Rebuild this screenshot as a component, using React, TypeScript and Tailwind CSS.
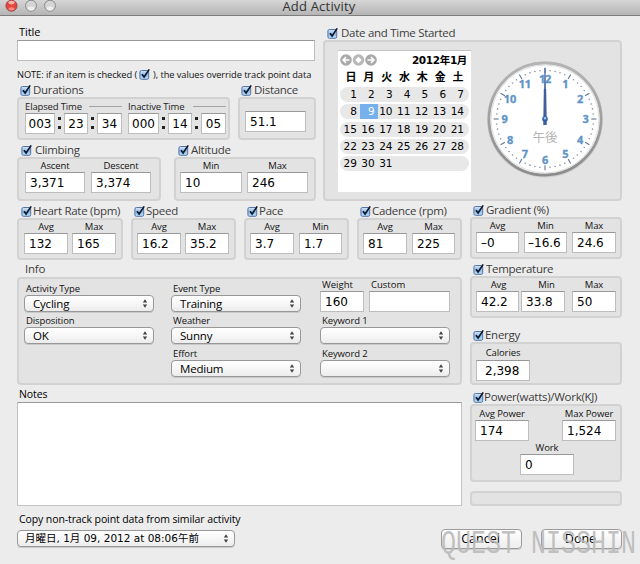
import type { ReactNode } from "react";
import clsx from "clsx";

function Check({ className }: { className?: string }) {
  return (
    <svg viewBox="0 0 12 13" className={clsx("h-[13px] w-3 shrink-0", className)}>
      <defs>
        <linearGradient id="chk" x1="0" y1="0" x2="0" y2="1">
          <stop offset="0" stopColor="#d8e8f8" />
          <stop offset="0.5" stopColor="#8dbbe8" />
          <stop offset="1" stopColor="#b9e2fb" />
        </linearGradient>
      </defs>
      <rect x="0.9" y="2.5" width="8.8" height="8.8" rx="1.5" fill="url(#chk)" stroke="#5673a5" />
      <path d="M3 6.2 5.1 9 10.2 1.4" fill="none" stroke="#10182c" strokeWidth="1.7" />
    </svg>
  );
}

type GroupProps = {
  title: string;
  className?: string;
  head?: string;
  label?: string;
  body?: string;
  children?: ReactNode;
};

function Group({ title, className, head = "pl-[3px]", label = "pl-px", body, children }: GroupProps) {
  return (
    <div className={clsx("flex shrink-0 flex-col", className)}>
      <div className={clsx("flex h-3 items-center pb-[2px] text-[11.5px] leading-3 tracking-[-0.28px] text-[#3c3c3c]", head)}>
        <Check />
        <span className={label}>{title}</span>
      </div>
      <div className={clsx(panel, "flex", body)}>{children}</div>
    </div>
  );
}

const panel = "rounded-[4px] border-2 border-[#d2d2d2] bg-[#e3e3e3]";

function Input({ value, className }: { value?: string; className?: string }) {
  return (
    <div
      className={clsx(
        "flex h-[21px] shrink-0 items-center border border-[#bdbdbd] border-t-[#999] bg-white pt-px pl-1 font-['DejaVu_Sans'] text-[12px] text-black",
        className,
      )}
    >
      {value}
    </div>
  );
}

function Field({ label, value, className }: { label: string; value: string; className: string }) {
  return (
    <div className="flex flex-col items-center">
      <span className="h-[13px] text-[9.5px] leading-[14px] tracking-[-0.1px] text-[#111]">{label}</span>
      <Input value={value} className={className} />
    </div>
  );
}

function Popup({ value, className, text = "text-[11.5px] tracking-[-0.2px] pl-2" }: { value?: string; className?: string; text?: string }) {
  return (
    <div
      className={clsx(
        "flex h-[17px] shrink-0 items-center justify-between rounded-[4px] border border-[#989898] bg-linear-to-b from-white via-[#f7f7f7] to-[#ececec] pr-[5px] text-black shadow-[0_1px_0_#c9c9c9]",
        className,
      )}
    >
      <span className={text}>{value}</span>
      <svg viewBox="0 0 6 9" className="h-[9px] w-1.5">
        <path d="M3 0.3 5.2 3.5H0.8zM3 8.7 5.2 5.5H0.8z" fill="#444" />
      </svg>
    </div>
  );
}

function LabeledPopup({ label, value, className }: { label: string; value?: string; className?: string }) {
  return (
    <div className={clsx("flex w-[130px] flex-col", className)}>
      <span className="h-3 pl-0.5 text-[9.5px] leading-3 tracking-[-0.1px] text-[#111]">{label}</span>
      <Popup value={value} />
    </div>
  );
}

function TimeFields({ label, values, first, last }: { label: string; values: string[]; first: string; last: string }) {
  return (
    <div className="flex flex-col">
      <div className="flex h-[13px] items-center">
        <span className="text-[9.5px] leading-3 tracking-[-0.15px] text-[#222]">{label}</span>
        <span className={clsx("ml-auto h-px bg-[#a5a5a5]", last)} />
      </div>
      <div className="flex">
        <Input value={values[0]} className={clsx("justify-center pl-0!", first)} />
        <Colon />
        <Input value={values[1]} className="w-6 justify-center pl-0!" />
        <Colon />
        <Input value={values[2]} className="w-[25px] justify-center pl-0!" />
      </div>
    </div>
  );
}

function Colon() {
  return (
    <span className="flex w-[9px] flex-col items-center gap-1.5 pt-1">
      <i className="h-[3px] w-[3px] bg-[#222]" />
      <i className="h-[3px] w-[3px] bg-[#222]" />
    </span>
  );
}

const weekdays = ["日", "月", "火", "水", "木", "金", "土"];
const weeks = [1, 8, 15, 22, 29];

function Calendar() {
  return (
    <div className="h-[142px] w-[133px] border-t border-[#c4c4c4] bg-white font-['DejaVu_Sans','Noto_Sans_CJK_JP',sans-serif] text-black">
      <div className="flex h-[18px] items-center justify-between pr-1 pl-0.5">
        <svg viewBox="0 0 37 12" className="h-3 w-[37px]">
          <g fill="#a9a9a9">
            <circle cx="6" cy="6" r="5.8" />
            <circle cx="18.5" cy="6" r="5.8" fill="#b8b8b8" />
            <circle cx="31" cy="6" r="5.8" />
          </g>
          <path d="M18.5 2.8 21.7 6 18.5 9.2 15.3 6z" fill="#fff" />
          <path d="M9.5 6H3.5M6 3.2 3.2 6 6 8.8M27.5 6h6M31 3.2 33.8 6 31 8.8" fill="none" stroke="#fff" strokeWidth="1.7" />
        </svg>
        <span className="text-[10.5px] leading-3 font-bold tracking-[-0.35px]">2012年1月</span>
      </div>
      <div className="grid h-[18px] grid-cols-7 items-center pr-1 pl-1 text-center text-[11px] leading-3 font-bold">
        {weekdays.map((d) => (
          <span key={d}>{d}</span>
        ))}
      </div>
      <div className="flex flex-col gap-[2.3px] px-0.5">
        {weeks.map((start) => (
          <div key={start} className="grid h-[15px] grid-cols-7 rounded-full bg-[#e8e8e8] pr-[2px] pl-[2px] text-right text-[10.5px] leading-[15px]">
            {weekdays.map((_, i) => {
              const day = start + i;
              return (
                <span key={i} className={clsx("pr-[3px]", day === 9 && "bg-[#76b1ee] text-white")}>
                  {day <= 31 ? day : ""}
                </span>
              );
            })}
          </div>
        ))}
      </div>
    </div>
  );
}

function Clock() {
  const at = (deg: number, r: number) => {
    const a = (deg * Math.PI) / 180;
    return [60 + r * Math.sin(a), 60 - r * Math.cos(a)];
  };
  return (
    <svg viewBox="0 0 120 120" className="size-[120px]">
      <defs>
        <linearGradient id="rim" x1="0" y1="0" x2="0" y2="1">
          <stop offset="0" stopColor="#b4b4b4" />
          <stop offset="1" stopColor="#8c8c8c" />
        </linearGradient>
      </defs>
      <circle cx="60" cy="60.5" r="58" fill="#cfcfcf" />
      <circle cx="60" cy="60" r="56" fill="#fff" stroke="url(#rim)" strokeWidth="2.8" />
      <circle cx="60" cy="60" r="54" fill="none" stroke="#dedede" strokeWidth="1" />
      {Array.from({ length: 60 }, (_, i) => {
        const [x, y] = at(i * 6, 48.5);
        if (i % 5) return <circle key={i} cx={x} cy={y} r="0.8" fill="#8194ad" />;
        const [x1, y1] = at(i * 6, 46.3);
        const [x2, y2] = at(i * 6, 51.3);
        return <line key={i} x1={x1} y1={y1} x2={x2} y2={y2} stroke="#62758f" strokeWidth="1.1" />;
      })}
      {Array.from({ length: 12 }, (_, i) => {
        const [x, y] = at((i + 1) * 30, 40.5);
        return (
          <text
            key={i}
            x={x}
            y={y + 4.3}
            textAnchor="middle"
            fill="#5e93c6"
            stroke="#5e93c6"
            strokeWidth="0.3"
            className="font-['Open_Sans'] text-[11px] font-bold tracking-[-0.2px]"
          >
            {i + 1}
          </text>
        );
      })}
      <text x="60" y="83" textAnchor="middle" fill="#b4b4b4" className="font-['Noto_Sans_CJK_JP',sans-serif] text-[12.5px]">
        午後
      </text>
      <path d="M59.4 9h1.2l0.9 57h-3z" fill="#4c6ba6" />
      <path d="M58.8 30h2.4l0.3 36h-3z" fill="#3f5e9c" />
      <circle cx="60" cy="60" r="2.8" fill="#2e5ea8" />
      <circle cx="60" cy="59.3" r="1.2" fill="#a3d0f5" />
    </svg>
  );
}

function TitleBar() {
  return (
    <div className="relative flex h-4 items-start justify-center border-b border-[#7d7d7d] bg-linear-to-b from-[#d6d6d6] to-[#b5b5b5]">
      <svg viewBox="0 0 60 13" className="absolute top-0 left-0 h-[13px] w-[60px]">
        <circle cx="11.5" cy="5.7" r="5.5" fill="#e5443f" stroke="#9c3e3c" />
        <ellipse cx="11.5" cy="2.6" rx="3.2" ry="1.8" fill="#f7b2ac" />
        <ellipse cx="11.5" cy="8.8" rx="3" ry="1.6" fill="#f58a80" />
        <circle cx="31" cy="5.7" r="5.5" fill="#d5d5d5" stroke="#8a8a8a" />
        <circle cx="50" cy="5.7" r="5.5" fill="#d5d5d5" stroke="#8a8a8a" />
        <ellipse cx="31" cy="8.5" rx="3.4" ry="2" fill="#eee" />
        <ellipse cx="50" cy="8.5" rx="3.4" ry="2" fill="#eee" />
      </svg>
      <span className="pr-0.5 text-[13px] leading-[13px] tracking-[0.2px] text-[#333]">Add Activity</span>
    </div>
  );
}

function PushButton({ children }: { children: string }) {
  return (
    <button className="h-5 w-[81px] rounded-[4px] border border-[#9b9b9b] bg-linear-to-b from-white to-[#ededed] pr-0.5 text-[12.5px] leading-[18px] text-black shadow-[0_1px_0_#cfcfcf]">
      {children}
    </button>
  );
}

export default function App() {
  return (
    <div className="relative h-[564px] w-[640px] overflow-hidden bg-[#ececec] font-['Open_Sans','Noto_Sans_CJK_JP',sans-serif] whitespace-nowrap">
      <TitleBar />

      {/* Title, durations, climbing + date */}
      <div className="flex h-[185px] gap-[7px] pl-[17px]">
        <div className="flex w-[299px] flex-col">
          <span className="mt-2.5 h-3.5 pl-0.5 text-[11px] leading-3 tracking-[-0.1px]">Title</span>
          <Input className="w-[298px]" />
          <div className="flex h-6 items-center pt-[3px] text-[9.3px] leading-3 tracking-[-0.08px] text-[#111]">
            NOTE: if an item is checked (<Check className="mx-0.5" />), the values override track point data
          </div>
          <div className="flex justify-between">
            <Group title="Durations" className="w-[213px]" body="h-[43px] gap-1.5 pt-[1px] pl-1.5">
              <TimeFields label="Elapsed Time" values={["003", "23", "34"]} first="w-[30px]" last="w-[33px]" />
              <TimeFields label="Inactive Time" values={["000", "14", "05"]} first="w-[31px]" last="w-[33px]" />
            </Group>
            <Group title="Distance" className="w-[78px]" body="h-[43px] pt-3 pl-[5px]">
              <Input value="51.1" className="w-[61px]" />
            </Group>
          </div>
          <div className="mt-[5px] flex justify-between">
            <Group title="Climbing" className="w-[144px]" label="pl-0.5" head="pl-1" body="h-11 gap-1.5 pl-1.5">
              <Field label="Ascent" value="3,371" className="w-[60px]" />
              <Field label="Descent" value="3,374" className="w-[60px]" />
            </Group>
            <Group title="Altitude" className="w-[142px]" head="pl-1" body="h-11 gap-[5px] pl-1">
              <Field label="Min" value="10" className="w-[62px]" />
              <Field label="Max" value="246" className="w-[61px]" />
            </Group>
          </div>
        </div>

        <Group title="Date and Time Started" className="mt-3 w-[299px]" head="pl-1" label="pl-0.5" body="mt-0 h-[161px] pt-2 pl-[13px]">
          <Calendar />
          <div className="pt-[9px] pl-[14px]">
            <Clock />
          </div>
        </Group>
      </div>

      <div className="flex gap-2 pl-[17px]">
        <div className="flex w-[445px] flex-col pt-[5px]">
          <div className="flex justify-between">
            <Group title="Heart Rate (bpm)" className="w-[106px]" label="pl-0" head="pl-1" body="h-[42px] gap-1 pl-[5px]">
              <Field label="Avg" value="132" className="w-11" />
              <Field label="Max" value="165" className="w-11" />
            </Group>
            <Group title="Speed" className="w-[105px]" label="pl-0" body="h-[42px] gap-1 pl-1">
              <Field label="Avg" value="16.2" className="w-11" />
              <Field label="Max" value="35.2" className="w-11" />
            </Group>
            <Group title="Pace" className="w-[105px]" label="pl-0" body="h-[42px] gap-[5px] pl-1">
              <Field label="Avg" value="3.7" className="w-11" />
              <Field label="Min" value="1.7" className="w-[43px]" />
            </Group>
            <Group title="Cadence (rpm)" className="w-[105px]" label="pl-0" body="h-[42px] gap-[5px] pl-1">
              <Field label="Avg" value="81" className="w-11" />
              <Field label="Max" value="225" className="w-[43px]" />
            </Group>
          </div>

          <span className="mt-[3px] h-3.5 pl-2 text-[11.5px] leading-3 tracking-[-0.2px] text-[#3c3c3c]">Info</span>
          <div className={clsx(panel, "flex h-[108px] pl-[5px]")}>
            <div className="flex w-[130px] flex-col gap-[3px] pt-1">
              <LabeledPopup label="Activity Type" value="Cycling" />
              <LabeledPopup label="Disposition" value="OK" />
            </div>
            <div className="ml-[17px] flex w-[130px] flex-col gap-[3px] pt-1">
              <LabeledPopup label="Event Type" value="Training" />
              <LabeledPopup label="Weather" value="Sunny" />
              <LabeledPopup label="Effort" value="Medium" className="mt-px" />
            </div>
            <div className="ml-[19px] flex w-[130px] flex-col">
              <div className="flex justify-between text-[9.5px] text-[#111]">
                <div className="w-11">
                  <span className="block h-3 pl-0.5 leading-3">Weight</span>
                  <Input value="160" />
                </div>
                <div className="w-[81px]">
                  <span className="block h-3 pl-0.5 leading-3">Custom</span>
                  <Input />
                </div>
              </div>
              <LabeledPopup label="Keyword 1" className="mt-[3px]" />
              <LabeledPopup label="Keyword 2" className="mt-1" />
            </div>
          </div>

          <span className="mt-[3px] h-3.5 pl-0.5 text-[10.5px] leading-3 tracking-[-0.1px]">Notes</span>
          <div className="h-[104px] border border-[#c3c3c3] border-t-[#999] bg-white" />
        </div>

        <div className="flex w-[152px] flex-col pt-1">
          <Group title="Gradient (%)" body="h-[42px] gap-[5px] pl-1">
            <Field label="Avg" value="–0" className="w-[43px]" />
            <Field label="Min" value="–16.6" className="w-[43px] pl-[3px]!" />
            <Field label="Max" value="24.6" className="w-11" />
          </Group>
          <Group title="Temperature" className="mt-[5px]" body="h-[42px] pl-1">
            <Field label="Avg" value="42.2" className="mr-0.5 w-[43px]" />
            <Field label="Min" value="33.8" className="mr-[7px] w-[44px]" />
            <Field label="Max" value="50" className="w-11" />
          </Group>
          <Group title="Energy" className="mt-[12px]" label="pl-0" body="h-[43px] pt-[2px] pl-1">
            <Field label="Calories" value="2,398" className="mt-px w-[54px] pl-2!" />
          </Group>
          <Group title="Power(watts)/Work(KJ)" className="mt-[7px]" label="-ml-px" body="h-[78px] flex-col pt-px">
            <div className="flex justify-between pr-1 pl-[3px]">
              <Field label="Avg Power" value="174" className="w-[54px]" />
              <Field label="Max Power" value="1,524" className="w-[54px]" />
            </div>
            <div className="flex justify-center pl-0.5">
              <Field label="Work" value="0" className="w-[54px]" />
            </div>
          </Group>
          <div className={clsx(panel, "mt-[9px] h-[15px]")} />
        </div>
      </div>

      <div className="flex justify-between pr-[18px] pl-[17px]">
        <div className="flex flex-col pt-[7px]">
          <span className="h-[17px] pl-0.5 text-[10.5px] leading-3 tracking-[-0.1px]">Copy non-track point data from similar activity</span>
          <Popup
            value="月曜日, 1月 09, 2012 at 08:06午前"
            className="w-[218px]"
            text="pl-[7px] text-[10.5px] font-['DejaVu_Sans','Noto_Sans_CJK_JP',sans-serif]"
          />
        </div>
        <div className="flex gap-[19px] pt-[23px]">
          <PushButton>Cancel</PushButton>
          <PushButton>Done</PushButton>
        </div>
      </div>

      <span className="absolute top-[532px] left-[441px] origin-center scale-y-[1.3] font-['Liberation_Mono'] text-[25px] leading-[26px] text-[#b9b9b9]/90">
        QUEST NISSHIN
      </span>
    </div>
  );
}
